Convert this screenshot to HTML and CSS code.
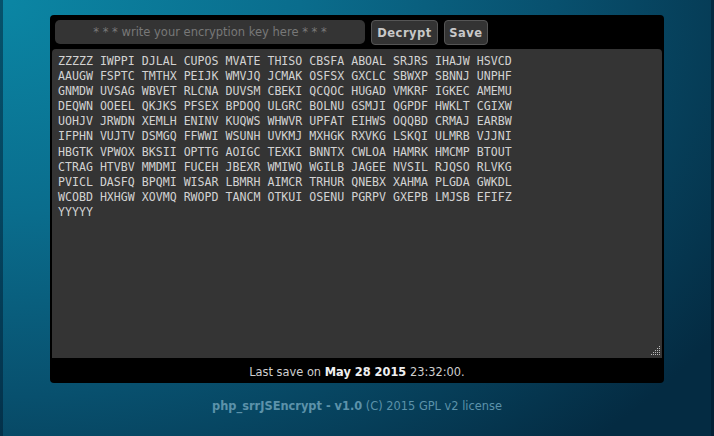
FILE: index.html
```html
<!DOCTYPE html>
<html>
<head>
<meta charset="utf-8">
<title>php_srrJSEncrypt</title>
<link rel="stylesheet" href="styles.css">
</head>
<body>
<div class="page">
  <div class="panel">
    <div class="toolbar">
      <div class="key-input">* * * write your encryption key here * * *</div>
      <button class="btn btn-decrypt">Decrypt</button>
      <button class="btn btn-save">Save</button>
    </div>
    <div class="editor">
      <div class="editor-text">ZZZZZ IWPPI DJLAL CUPOS MVATE THISO CBSFA ABOAL SRJRS IHAJW HSVCD
AAUGW FSPTC TMTHX PEIJK WMVJQ JCMAK OSFSX GXCLC SBWXP SBNNJ UNPHF
GNMDW UVSAG WBVET RLCNA DUVSM CBEKI QCQOC HUGAD VMKRF IGKEC AMEMU
DEQWN OOEEL QKJKS PFSEX BPDQQ ULGRC BOLNU GSMJI QGPDF HWKLT CGIXW
UOHJV JRWDN XEMLH ENINV KUQWS WHWVR UPFAT EIHWS OQQBD CRMAJ EARBW
IFPHN VUJTV DSMGQ FFWWI WSUNH UVKMJ MXHGK RXVKG LSKQI ULMRB VJJNI
HBGTK VPWOX BKSII OPTTG AOIGC TEXKI BNNTX CWLOA HAMRK HMCMP BTOUT
CTRAG HTVBV MMDMI FUCEH JBEXR WMIWQ WGILB JAGEE NVSIL RJQSO RLVKG
PVICL DASFQ BPQMI WISAR LBMRH AIMCR TRHUR QNEBX XAHMA PLGDA GWKDL
WCOBD HXHGW XOVMQ RWOPD TANCM OTKUI OSENU PGRPV GXEPB LMJSB EFIFZ
YYYYY</div>
      <svg class="grip" width="12" height="12" viewBox="0 0 12 12">
        <g fill="#bbbbbb">
          <rect x="10" y="1" width="1" height="1"/>
          <rect x="8" y="3" width="1" height="1"/><rect x="10" y="3" width="1" height="1"/>
          <rect x="6" y="5" width="1" height="1"/><rect x="8" y="5" width="1" height="1"/><rect x="10" y="5" width="1" height="1"/>
          <rect x="4" y="7" width="1" height="1"/><rect x="6" y="7" width="1" height="1"/><rect x="8" y="7" width="1" height="1"/><rect x="10" y="7" width="1" height="1"/>
          <rect x="2" y="9" width="1" height="1"/><rect x="4" y="9" width="1" height="1"/><rect x="6" y="9" width="1" height="1"/><rect x="8" y="9" width="1" height="1"/><rect x="10" y="9" width="1" height="1"/>
        </g>
      </svg>
    </div>
    <div class="status">Last save on <b>May 28 2015</b> 23:32:00.</div>
  </div>
  <div class="footer"><b>php_srrJSEncrypt - v1.0</b> (C) 2015 GPL v2 license</div>
</div>
</body>
</html>
```
FILE: styles.css
```css
html, body {
  margin: 0;
  padding: 0;
  height: 100%;
}
body {
  font-family: "DejaVu Sans", sans-serif;
  background: radial-gradient(ellipse 120% 140% at 0% 0%, #0b86a4 0%, #0a6d8d 35%, #08506e 65%, #042b42 100%);
  box-shadow: inset 3px 0 0 rgba(0, 20, 40, 0.45), inset -3px 0 0 rgba(0, 10, 25, 0.35);
  overflow: hidden;
}
.page {
  padding-top: 15px;
}
.panel {
  width: 614px;
  margin: 0 auto;
  background: #000;
  border-radius: 4px;
}
.toolbar {
  display: flex;
  align-items: flex-start;
  gap: 6px;
  padding: 5px 5px 4px 5px;
}
.key-input {
  width: 310px;
  height: 24px;
  line-height: 25px;
  background: #343434;
  border-radius: 5px;
  color: #787878;
  font-size: 11.5px;
  text-align: center;
}
.btn {
  height: 25px;
  padding: 0;
  background: #333;
  border: 1px solid #555;
  border-radius: 4px;
  color: #c8c8c8;
  font-family: "DejaVu Sans", sans-serif;
  font-weight: bold;
  font-size: 11.5px;
  letter-spacing: 0.5px;
}
.btn-decrypt { width: 67px; }
.btn-save { width: 44px; }
.editor {
  position: relative;
  margin: 0 2px;
  height: 309px;
  background: #343434;
  border-radius: 4px 4px 0 0;
  box-sizing: border-box;
  padding: 5px 6px;
}
.editor-text {
  font-family: "DejaVu Sans Mono", monospace;
  font-size: 11.6px;
  line-height: 15.1px;
  color: #d2d2d2;
  white-space: pre;
}
.grip {
  position: absolute;
  right: 1px;
  bottom: 1px;
}
.status {
  height: 25px;
  line-height: 29px;
  text-align: center;
  color: #cfcfcf;
  font-size: 11.4px;
}
.status b {
  color: #f0f0f0;
}
.footer {
  margin-top: 16px;
  text-align: center;
  color: #5c92aa;
  font-size: 11.4px;
}
```
